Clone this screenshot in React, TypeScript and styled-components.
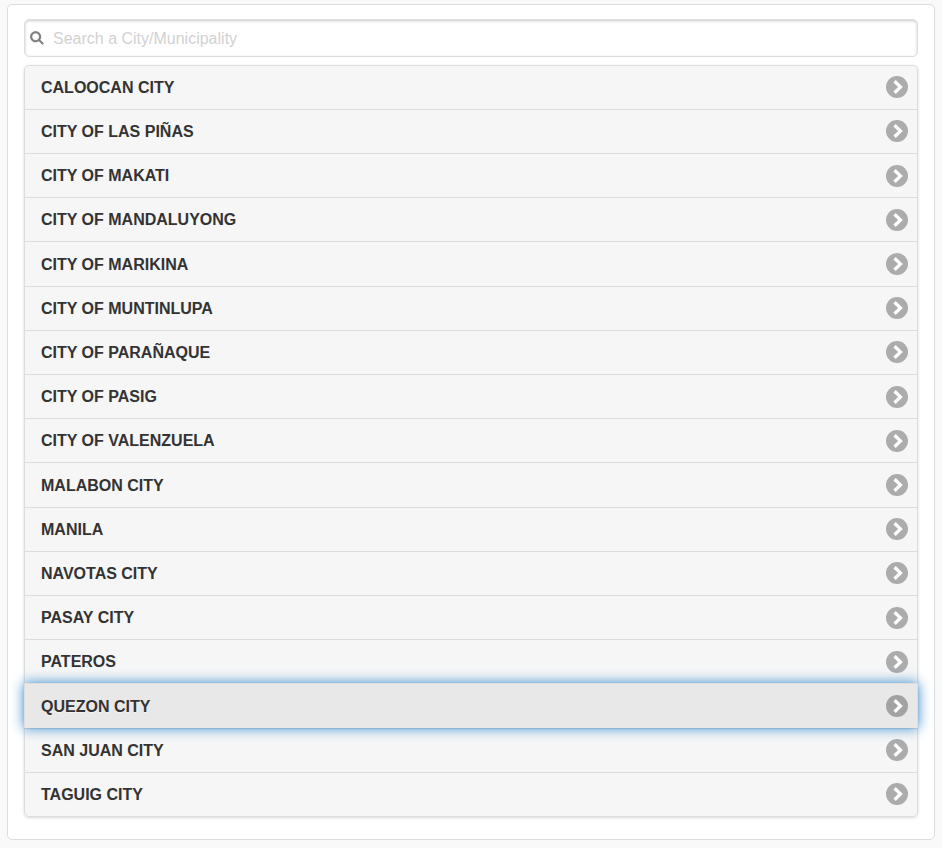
import React from "react";
import styled, { createGlobalStyle } from "styled-components";

const GlobalStyle = createGlobalStyle`
  * { box-sizing: border-box; }
  body {
    margin: 0;
    background: #f9f9f9;
    color: #333;
    font: 16px/1.3 "Liberation Sans", Arial, Helvetica, sans-serif;
  }
`;

const Page = styled.main`
  padding: 4px 7px 8px;
  height: 848px;
`;

const Panel = styled.section`
  height: 836px;
  padding: 14px 16px;
  background: #fff;
  border: 1px solid #ddd;
  border-radius: 5px;
`;

const SearchBox = styled.label`
  display: flex;
  align-items: center;
  gap: 9px;
  height: 37.7px;
  margin-bottom: 8.02px;
  padding-left: 5px;
  border: 1px solid #ddd;
  border-radius: 5px;
  background: #fff;
  box-shadow: inset 0 1px 3px rgba(0, 0, 0, 0.2);
`;

const SearchInput = styled.input`
  flex: 1;
  min-width: 0;
  padding: 2px 0 0;
  border: 0;
  outline: 0;
  background: transparent;
  color: #333;
  font: inherit;
  line-height: 22.4px;

  &::placeholder {
    color: #d2d2d2;
    opacity: 1;
  }
`;

const CityList = styled.ul`
  margin: 0;
  padding: 0;
  list-style: none;
  border-radius: 5px;
  box-shadow: 0 1px 3px rgba(0, 0, 0, 0.15);
`;

const CityRow = styled.li<{ $focused: boolean }>`
  display: flex;
  align-items: center;
  justify-content: space-between;
  height: 44.19px;
  padding: 0 9px 0 16px;
  border: 1px solid #ddd;
  border-bottom-width: 0;
  background: ${(p) => (p.$focused ? "#e8e8e8" : "#f6f6f6")};
  font-weight: 700;
  text-shadow: 0 1px 0 #f3f3f3;
  ${(p) => p.$focused && "position: relative; z-index: 1; box-shadow: 0 0 12px #38c;"}

  &:first-child {
    border-radius: 5px 5px 0 0;
  }
  &:last-child {
    height: 45.19px;
    border-bottom-width: 1px;
    border-radius: 0 0 5px 5px;
  }
`;

const CityName = styled.span`
  padding-top: 1.99px;
`;

const Disc = styled.span`
  display: flex;
  align-items: center;
  justify-content: center;
  width: 22px;
  height: 22px;
  border-radius: 50%;
  background: rgba(0, 0, 0, 0.3);
`;

const SearchIcon = () => (
  <svg width="14" height="14" viewBox="0 0 14 14" fill="#7f7f7f" stroke="#7f7f7f" strokeWidth="0.12" overflow="visible">
    <path d="M10.171,8.766c0.617-0.888,0.979-1.964,0.979-3.126c0-3.037-2.463-5.5-5.5-5.5s-5.5,2.463-5.5,5.5s2.463,5.5,5.5,5.5c1.152,0,2.223-0.355,3.104-0.962l3.684,3.683l1.414-1.414L10.171,8.766z M5.649,9.14c-1.933,0-3.5-1.567-3.5-3.5c0-1.933,1.567-3.5,3.5-3.5c1.933,0,3.5,1.567,3.5,3.5C9.149,7.572,7.582,9.14,5.649,9.14z" />
  </svg>
);

const Chevron = () => (
  <svg width="14" height="14" viewBox="0 0 14 14" fill="#fff">
    <polygon points="3.4,2.4 5.7,0.1 12.8,7 5.7,13.9 3.4,11.6 8.1,7" />
  </svg>
);

const cities = [
  "CALOOCAN CITY",
  "CITY OF LAS PIÑAS",
  "CITY OF MAKATI",
  "CITY OF MANDALUYONG",
  "CITY OF MARIKINA",
  "CITY OF MUNTINLUPA",
  "CITY OF PARAÑAQUE",
  "CITY OF PASIG",
  "CITY OF VALENZUELA",
  "MALABON CITY",
  "MANILA",
  "NAVOTAS CITY",
  "PASAY CITY",
  "PATEROS",
  "QUEZON CITY",
  "SAN JUAN CITY",
  "TAGUIG CITY",
];

export default function App() {
  return (
    <>
      <GlobalStyle />
      <Page>
        <Panel>
          <SearchBox>
            <SearchIcon />
            <SearchInput placeholder="Search a City/Municipality" />
          </SearchBox>
          <CityList>
            {cities.map((city) => (
              <CityRow key={city} $focused={city === "QUEZON CITY"}>
                <CityName>{city}</CityName>
                <Disc>
                  <Chevron />
                </Disc>
              </CityRow>
            ))}
          </CityList>
        </Panel>
      </Page>
    </>
  );
}
